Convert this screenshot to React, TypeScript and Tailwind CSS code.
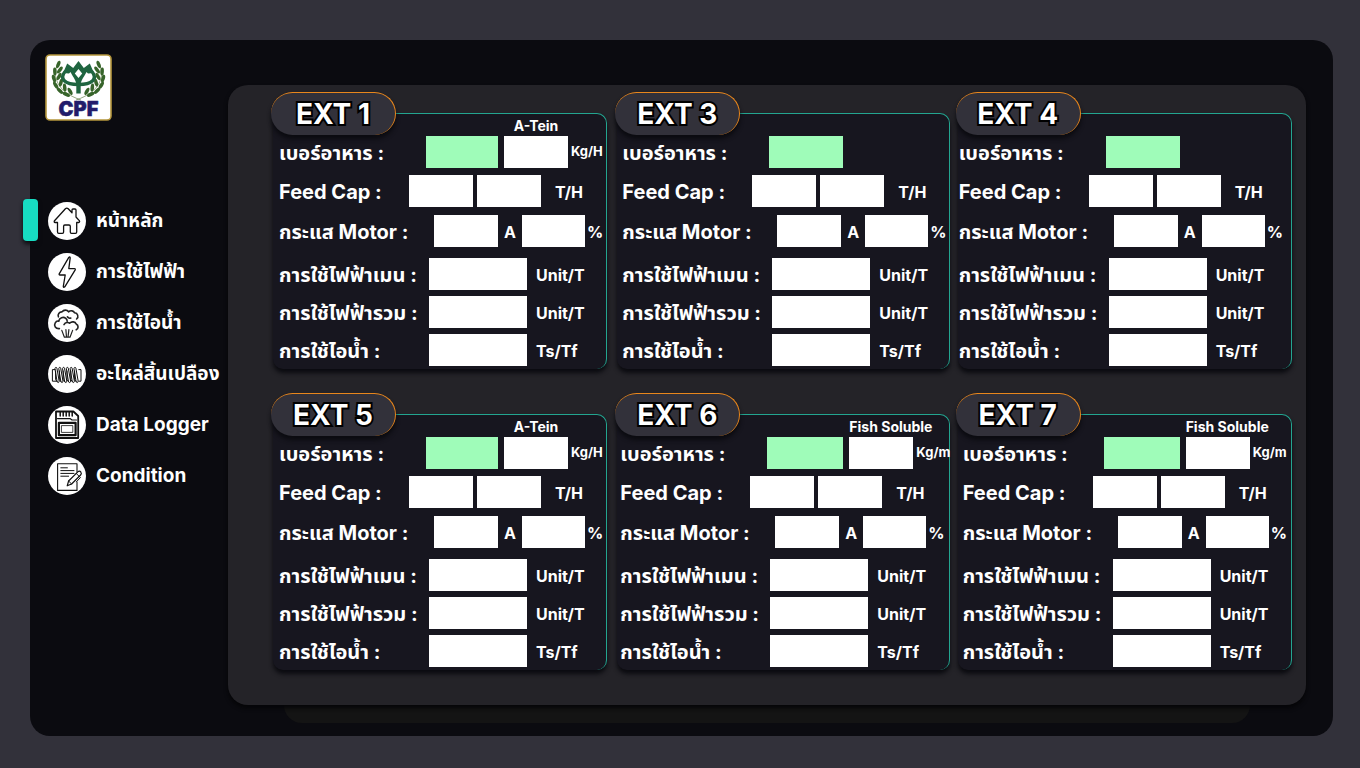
import { useState } from 'react';
import type { ReactNode } from 'react';
import clsx from 'clsx';

interface Extra {
  title: string;
  titleClass: string;
  unit: string;
}

interface Machine {
  id: string;
  name: string;
  inset: string;
  feedLabel: string;
  feedField: string;
  extra?: Extra;
}

const aTein: Extra = { title: 'A-Tein', titleClass: 'left-1/2 -translate-x-1/2', unit: 'Kg/H' };
const fishSoluble: Extra = { title: 'Fish Soluble', titleClass: 'left-0', unit: 'Kg/m' };

const machines: Machine[] = [
  { id: 'ext1', name: 'EXT 1', inset: 'pl-1.5', feedLabel: 'w-[147px]', feedField: 'w-[72px]', extra: aTein },
  { id: 'ext3', name: 'EXT 3', inset: 'ml-0.5 pl-[5px]', feedLabel: 'w-[147px]', feedField: 'w-[74px]' },
  { id: 'ext4', name: 'EXT 4', inset: 'pl-px', feedLabel: 'w-[147px]', feedField: 'w-[74px]' },
  { id: 'ext5', name: 'EXT 5', inset: 'pl-1.5', feedLabel: 'w-[147px]', feedField: 'w-[72px]', extra: aTein },
  { id: 'ext6', name: 'EXT 6', inset: 'ml-0.5 pl-[3px]', feedLabel: 'w-[147px]', feedField: 'w-[76px]', extra: fishSoluble },
  { id: 'ext7', name: 'EXT 7', inset: 'pl-[5px]', feedLabel: 'w-[141px]', feedField: 'w-[76px]', extra: fishSoluble },
];

const menu: { label: string; icon: ReactNode }[] = [
  { label: 'หน้าหลัก', icon: <HomeIcon /> },
  { label: 'การใช้ไฟฟ้า', icon: <BoltIcon /> },
  { label: 'การใช้ไอน้ำ', icon: <SteamIcon /> },
  { label: 'อะไหล่สิ้นเปลือง', icon: <ScrewIcon /> },
  { label: 'Data Logger', icon: <CardIcon /> },
  { label: 'Condition', icon: <NoteIcon /> },
];

function Icon({ children }: { children: ReactNode }) {
  return (
    <svg
      viewBox="0 0 38 38"
      className="size-[38px] shrink-0 rounded-full bg-white"
      fill="none"
      stroke="#111"
      strokeWidth="1.3"
      strokeLinecap="round"
      strokeLinejoin="round"
      aria-hidden="true"
    >
      {children}
    </svg>
  );
}

function HomeIcon() {
  return (
    <Icon>
      <path d="M9.5 20.5H7.2Q5.6 20.2 6.5 18.7L17.4 6.8Q18.8 5.4 20.2 6.8L24 10.8V8Q24 7 25 7H27Q28 7 28 8V15L31.3 18.6Q32.2 20.2 30.6 20.5H28.7V30Q28.7 31.3 27.4 31.3H23.5Q22.3 31.3 22.3 30V24.2Q22.3 23 21 23H16.8Q15.6 23 15.6 24.2V30Q15.6 31.3 14.4 31.3H10.8Q9.5 31.3 9.5 30Z" />
    </Icon>
  );
}

function BoltIcon() {
  return (
    <Icon>
      <path d="M20.8 4.4L11.2 20.8Q10.8 21.9 12 22H17.2L15.3 33.4Q15.4 35.2 16.8 33.8L27.2 16.8Q27.6 15.7 26.4 15.6H20.8L22.2 4.9Q21.9 3.3 20.8 4.4Z" />
    </Icon>
  );
}

function SteamIcon() {
  return (
    <Icon>
      <g stroke="#222" strokeWidth="1.6">
        <path d="M10.4 12.8C9.4 10.5 11.2 7.8 14 7.9C15.6 5.6 19 5.5 20.6 7.8C22.5 6.2 25.6 6.6 26.6 8.8C29.8 9 31 13 28.6 15" />
        <path d="M11.4 24.6C7.6 25 5.6 21.6 7.2 19C8 17.4 9.6 16.8 10.8 17.2C11.2 13.6 15.4 12.4 17.8 14.4C18.8 15.2 19.2 16.2 19.2 17.2" />
        <path d="M16 20.6C17.4 18.2 20.2 18 21.6 19.2C23.8 17 27.2 17.6 28.2 20C30.8 21.2 30.6 24.8 28.2 25.8" />
        <path d="M19.4 12.8C20.2 14 21.6 14.4 22.8 14" />
        <path d="M13.8 26.4L16.4 33.2H22L24.6 26.4M17.9 25.6L18.5 33.2M20.9 25.6L20 33.2" strokeWidth="1.2" />
      </g>
    </Icon>
  );
}

function ScrewIcon() {
  return (
    <Icon>
      <g strokeWidth="1">
        <path d="M7 14.6H4.4V26.2H8.4M30.8 14.6H33V26.2H31" />
        {[7, 10.8, 14.6, 18.4, 22.2, 26].map((x) => (
          <path key={x} d={`M${x} 13.2C${x + 0.2} 12 ${x + 1.6} 12 ${x + 1.9} 13.2L${x + 4.2} 26.2C${x + 4} 28 ${x + 2.4} 28 ${x + 2.1} 26.6ZM${x + 0.6} 16V24.6L${x + 2.1} 26.6`} />
        ))}
      </g>
    </Icon>
  );
}

function CardIcon() {
  return (
    <Icon>
      <path d="M8 5.5H25.4L30.2 10V32H8Z" fill="#fff" strokeWidth="1.8" />
      <path d="M12.2 6V10M15.2 6V10M18.2 6V10M21.2 6V10M24.2 6V10" strokeWidth="1.5" />
      <path d="M9.5 12.6H22L24 14H28.5" strokeWidth="1.2" />
      <path d="M10.9 16.8H27.6V29.2H10.9Z" strokeWidth="2.2" />
      <path d="M13.8 19.6H24.8V26.4H13.8Z" strokeWidth="0.8" />
    </Icon>
  );
}

function NoteIcon() {
  return (
    <Icon>
      <path d="M29 15V6.8H9.6V33.4H29V25" strokeWidth="1.1" />
      <path d="M12.8 10.8H19.4M12.8 13.6H26M12.8 16.4H26M12.8 19.2H20.6" strokeWidth="1" />
      <path d="M19.2 28.8L20.6 24L29.8 14.8Q31.6 13.6 32.8 15Q34 16.6 32.6 18L23.6 27Z" fill="#fff" strokeWidth="1.2" />
      <path d="M20.6 24L23.6 27M28.2 16.4L31.2 19.4M31.2 19.4L32.4 20.6L28.4 24.8" strokeWidth="1" />
    </Icon>
  );
}

const leaves = [
  [-20.2, -13.5, 20],
  [-23.6, -6.5, -4],
  [-18.6, -8, 38],
  [-24.6, 0.5, -16],
  [-19.4, -1.5, 28],
  [-22.8, 7.2, -32],
  [-17.6, 4.6, 14],
  [-18.6, 12.8, -46],
  [-13.8, 9.6, -6],
  [-12.2, 16.4, -64],
  [-8.4, 13.4, -28],
];

function Logo() {
  return (
    <svg viewBox="0 0 67 67" className="size-[67px]" role="img" aria-label="CPF">
      <rect x="1" y="1" width="65" height="65" rx="4" fill="#fff" stroke="#b5963c" strokeWidth="1.6" />
      <g fill="none" stroke="#4c6b2c" strokeWidth="0.6">
        <path d="M13.5 8C6 22 12 38 36 46" />
        <path d="M53.5 8C61 22 55 38 31 46" />
      </g>
      <g fill="#37642a">
        {[1, -1].map((side) => (
          <g key={side} transform={`translate(33.5 24) scale(${side} 1)`}>
            {leaves.map(([x, y, angle]) => (
              <ellipse key={`${x}${y}`} cx={x} cy={y} rx="1.8" ry="4" transform={`rotate(${angle} ${x} ${y})`} />
            ))}
          </g>
        ))}
      </g>
      {/* Lotus */}
      <g fill="none" stroke="#1f6540" strokeLinejoin="miter">
        <path d="M20.5 17C13.5 25 20 30.5 33.5 30.5C47 30.5 53.5 25 46.5 17" strokeWidth="3.4" />
        <path d="M33.5 29V39.5" strokeWidth="4.4" />
      </g>
      <path
        fill="#1f6540"
        fillRule="evenodd"
        d="M33.5 7L38.8 14L44.8 9.5L49 19L43 19.5L41.5 18C39.5 22.5 36.5 25 35.6 30H31.4C30.5 25 27.5 22.5 25.5 18L24 19.5L18 19L22.2 9.5L28.2 14ZM33.5 15L29.8 19.5L33.5 24L37.2 19.5Z"
      />
      <text x="33.5" y="62" textAnchor="middle" fill="#211c6b" stroke="#211c6b" strokeWidth="0.5" className="font-[Inter,sans-serif] text-[20px] font-black">
        CPF
      </text>
    </svg>
  );
}

function Field({ id, label, className }: { id: string; label?: string; className: string }) {
  return <input id={id} aria-label={label} type="text" className={clsx('h-8 shrink-0 px-2 text-base text-black outline-none', className)} />;
}

function Row({ id, label, labelWidth, className, children }: { id: string; label: string; labelWidth: string; className?: string; children: ReactNode }) {
  return (
    <div className={clsx('flex h-8 items-center whitespace-nowrap', className)}>
      <label htmlFor={id} className={clsx('shrink-0 pt-0.5 text-xl leading-7', labelWidth)}>
        {label} :
      </label>
      {children}
    </div>
  );
}

function Unit({ className, children }: { className?: string; children: ReactNode }) {
  return <span className={clsx('pt-0.5 text-base', className)}>{children}</span>;
}

function MachineCard({ machine }: { machine: Machine }) {
  const { id, name, inset, feedLabel, feedField, extra } = machine;

  return (
    <section className={clsx('relative rounded-[10px] border-t border-r border-[#23a590] bg-[#17161f] pt-[22px] pb-[3px] shadow-[0_4px_4px_#0b0b10]', inset)}>
      <h2 className="absolute -top-[22px] -left-0.5 flex h-[43px] w-[125px] items-center justify-center rounded-full border-t border-r border-[#e8861c] bg-[#32313a] text-[28px] font-bold shadow-[0_4px_4px_#0b0b10] [paint-order:stroke_fill] [-webkit-text-stroke:4px_black]">
        {name}
      </h2>

      <Row id={`${id}-feed`} label="เบอร์อาหาร" labelWidth={feedLabel} className="mb-[7px]">
        <Field id={`${id}-feed`} className={clsx('bg-[#9ffcb9]', feedField)} />
        {extra && (
          <>
            <div className="relative mr-[3px] ml-1.5">
              <label htmlFor={`${id}-extra`} className={clsx('absolute bottom-full text-sm leading-5', extra.titleClass)}>
                {extra.title}
              </label>
              <Field id={`${id}-extra`} className="block w-16 bg-white" />
            </div>
            <span className="text-[13px]">{extra.unit}</span>
          </>
        )}
      </Row>

      <Row id={`${id}-cap`} label="Feed Cap" labelWidth="w-[130px]" className="mb-2">
        <Field id={`${id}-cap`} className="w-16 bg-white" />
        <Field id={`${id}-cap-set`} label="Feed Cap 2" className="ml-1 w-16 bg-white" />
        <Unit className="ml-3.5">T/H</Unit>
      </Row>

      <Row id={`${id}-motor`} label="กระแส Motor" labelWidth="w-[155px]" className="mb-[11px]">
        <Field id={`${id}-motor`} className="w-16 bg-white" />
        <Unit className="w-6 text-center">A</Unit>
        <Field id={`${id}-motor-load`} label="Motor %" className="w-[63px] bg-white" />
        <Unit className="ml-0.5">%</Unit>
      </Row>

      <Row id={`${id}-main`} label="การใช้ไฟฟ้าเมน" labelWidth="w-[150px]" className="mb-1.5">
        <Field id={`${id}-main`} className="w-[98px] bg-white" />
        <Unit className="ml-[9px]">Unit/T</Unit>
      </Row>

      <Row id={`${id}-total`} label="การใช้ไฟฟ้ารวม" labelWidth="w-[150px]" className="mb-1.5">
        <Field id={`${id}-total`} className="w-[98px] bg-white" />
        <Unit className="ml-[9px]">Unit/T</Unit>
      </Row>

      <Row id={`${id}-steam`} label="การใช้ไอน้ำ" labelWidth="w-[150px]">
        <Field id={`${id}-steam`} className="w-[98px] bg-white" />
        <Unit className="ml-[9px]">Ts/Tf</Unit>
      </Row>
    </section>
  );
}

export default function App() {
  const [active, setActive] = useState(0);

  return (
    <div className="flex min-h-screen bg-[#32313a] pt-10 pr-[27px] pb-8 pl-[30px] font-['Inter','Noto_Sans_Thai',sans-serif] font-bold text-white">
      <div className="flex flex-1 rounded-[20px] bg-[#0b0b10]">
        {/* Sidebar */}
        <aside className="w-[198px] shrink-0 pt-3.5">
          <a href="#home" className="ml-[15px] block w-fit">
            <Logo />
          </a>
          <nav className="mt-[81px] flex flex-col gap-[13px]">
            {menu.map((item, index) => (
              <a
                key={item.label}
                href={`#page-${index + 1}`}
                onClick={() => setActive(index)}
                className="relative flex h-[38px] items-center gap-[10px] pl-[18px] text-[19px] whitespace-nowrap"
              >
                {active === index && <span className="absolute -top-[3px] -left-[7px] h-[42px] w-[15px] rounded-sm bg-[#17dcc2] shadow-[0_3px_4px_#0b0b10]" />}
                {item.icon}
                {item.label}
              </a>
            ))}
          </nav>
        </aside>

        {/* Machine overview */}
        <div className="flex flex-1 flex-col pt-[45px] pr-[27px] pb-[13px]">
          <main className="relative grid flex-1 grid-cols-3 content-start gap-x-2 gap-y-[45px] rounded-[20px] bg-[#242328] pt-7 pr-3.5 pb-[35px] pl-[45px] shadow-[0_3px_4px_#050507]">
            {machines.map((machine) => (
              <MachineCard key={machine.id} machine={machine} />
            ))}
          </main>
          <div className="mx-14 h-[18px] rounded-b-[20px] bg-[#141414]" />
        </div>
      </div>
    </div>
  );
}
